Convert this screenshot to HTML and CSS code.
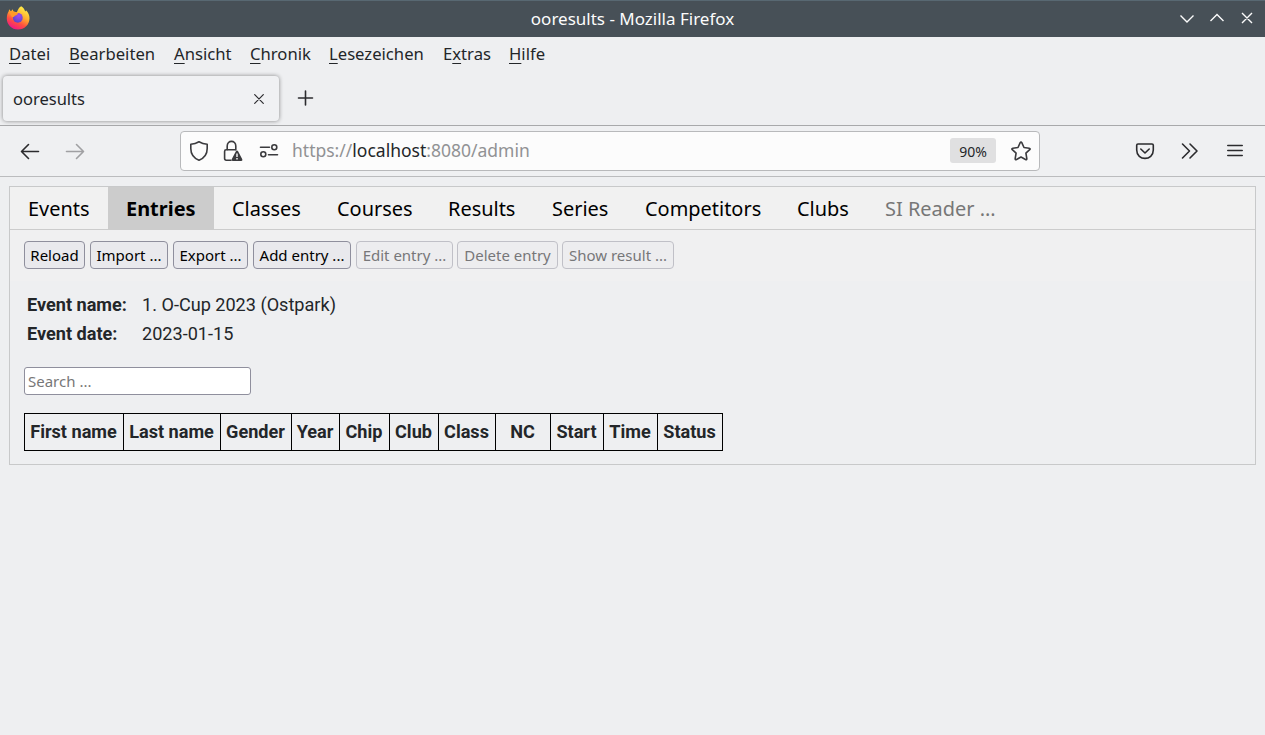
FILE: index.html
```html
<!DOCTYPE html>
<html lang="de">
<head>
<meta charset="utf-8">
<title>ooresults</title>
<link rel="stylesheet" href="styles.css">
</head>
<body>
<header class="titlebar">
  <svg class="logo" width="24" height="24" viewBox="0 0 24 24">
    <defs>
      <linearGradient id="flame" x1="0.8" y1="0.05" x2="0.3" y2="1">
        <stop offset="0" stop-color="#fff14a"/><stop offset="0.38" stop-color="#ffb02e"/>
        <stop offset="0.68" stop-color="#ff4f3f"/><stop offset="1" stop-color="#f0148c"/>
      </linearGradient>
      <radialGradient id="globe" cx="0.6" cy="0.3" r="0.7">
        <stop offset="0" stop-color="#a04bf0"/><stop offset="1" stop-color="#5b47c8"/>
      </radialGradient>
    </defs>
    <path fill="url(#flame)" d="M15.2.3C17.3 1.600 18.600 3.600 19.200 5.400C20 4.900 20 4.500 20 4.300C22.300 6.600 23.500 9.300 23.500 12.200C23.500 18.700 18.400 23.500 12 23.500C5.500 23.500.8 18.500.8 12.500C.8 9.500 1.500 7 2.700 5.200L3.200 3.300L5 5.600L6.500 3.200L7.500 5.500L10.800 6.200C12 4 12.800 1.500 15.200.3Z"/>
    <circle cx="11.800" cy="11.800" r="4.900" fill="url(#globe)"/>
    <path fill="#ff9a28" d="M3 5.300L7.500 5.500L12 7.200C11.800 9 9.800 9.200 8.800 9.800C8.300 11.200 6.500 11.500 5.500 10.500Z"/>
  </svg>
  <div class="caption">ooresults - Mozilla Firefox</div>
  <svg class="winctl" width="80" height="20" viewBox="0 0 80 20">
    <path d="M5.500 7.500L12 14L18.500 7.500M35.500 13L42 6.500L48.500 13M67 5L77 15M77 5L67 15"/>
  </svg>
</header>
<nav class="menubar">
  <span class="m1"><u>D</u>atei</span><span class="m2"><u>B</u>earbeiten</span><span class="m3"><u>A</u>nsicht</span><span class="m4"><u>C</u>hronik</span><span class="m5"><u>L</u>esezeichen</span><span class="m6">E<u>x</u>tras</span><span class="m7"><u>H</u>ilfe</span>
</nav>
<div class="tabstrip">
  <div class="browser-tab"><span>ooresults</span>
    <svg class="ico thin" width="10" height="10" viewBox="0 0 10 10"><path d="M.7.7L9.300 9.300M9.300.7L.7 9.300"/></svg>
  </div>
  <svg class="ico newtab" width="17" height="16" viewBox="0 0 17 16"><path d="M8.500 1V15M1.500 8H15.500"/></svg>
</div>
<div class="toolbar">
  <svg class="ico back" width="20" height="18" viewBox="0 0 20 18"><path d="M18.500 9.500H2M8.500 2.500L1.500 9.500L8.500 16.500"/></svg>
  <svg class="ico forward" width="20" height="18" viewBox="0 0 20 18"><path d="M1.500 9.500H18M11.500 2.500L18.500 9.500L11.500 16.500"/></svg>
  <div class="urlbar">
    <svg class="ico shield" width="20" height="22" viewBox="0 0 20 22"><path d="M10 1.700C12.500 3.200 15 4 18.200 4.300V8.500C18.200 14 15.500 18 10 20.300C4.500 18 1.800 14 1.800 8.500V4.300C5 4 7.500 3.200 10 1.700Z"/></svg>
    <svg class="ico lock" width="20" height="22" viewBox="0 0 20 22"><path d="M4.200 10V6C4.200 -.2 12.800 -.2 12.800 6V10M8 20.200H3.200Q1.600 20.200 1.600 18.600V11.400Q1.600 9.800 3.200 9.800H12.500"/><path class="solid" d="M14 10.500Q14.700 10.500 15.100 11.300L19.300 19.300Q19.800 21 18.300 21H9.700Q8.200 21 8.700 19.300L12.900 11.300Q13.300 10.500 14 10.500Z"/><path class="mark" d="M14 13.500V17M14 18V19.500"/></svg>
    <svg class="ico perms" width="20" height="14" viewBox="0 0 20 14"><path d="M1.500 3.300H10.500M9.500 10.700H18.500"/><circle cx="15.300" cy="3.300" r="2.500"/><circle cx="4.300" cy="10.300" r="2.500"/></svg>
    <span class="url">https://<b>localhost</b>:8080/admin</span>
    <span class="zoom">90%</span>
    <svg class="ico star" width="22" height="22" viewBox="0 0 22 22"><path d="M11 2Q11.500 2 11.800 2.700L14 7.500L19.200 8.200Q20.700 8.600 19.700 9.700L15.900 13.200L16.800 18.500Q16.900 20.200 15.500 19.500L11 17L6.500 19.500Q5.100 20.200 5.200 18.500L6.100 13.200L2.300 9.700Q1.300 8.600 2.800 8.200L8 7.500L10.200 2.700Q10.500 2 11 2Z"/></svg>
  </div>
  <svg class="ico pocket" width="20" height="18" viewBox="0 0 20 18"><path d="M3 2H17Q18.300 2 18.300 3.300V8C18.300 19.200 1.700 19.200 1.700 8V3.300Q1.700 2 3 2ZM5.800 7L10 11L14.200 7"/></svg>
  <svg class="ico more" width="18" height="18" viewBox="0 0 18 18"><path d="M1.500 2L8.500 9L1.500 16M9 2L16 9L9 16"/></svg>
  <svg class="ico burger" width="16" height="14" viewBox="0 0 16 14"><path d="M.8 1.500H15.200M.8 6.500H15.200M.8 11.500H15.200"/></svg>
</div>
<main class="panel">
  <nav class="tabs">
    <a class="t1">Events</a><a class="t2 active">Entries</a><a class="t3">Classes</a><a class="t4">Courses</a><a class="t5">Results</a><a class="t6">Series</a><a class="t7">Competitors</a><a class="t8">Clubs</a><a class="t9 off">SI Reader ...</a>
  </nav>
  <div class="actions">
    <button class="b1">Reload</button><button class="b2">Import ...</button><button class="b3">Export ...</button><button class="b4">Add entry ...</button><button class="b5" disabled>Edit entry ...</button><button class="b6" disabled>Delete entry</button><button class="b7" disabled>Show result ...</button>
  </div>
  <dl class="event">
    <dt>Event name:</dt><dd>1. O-Cup 2023 (Ostpark)</dd>
    <dt>Event date:</dt><dd>2023-01-15</dd>
  </dl>
  <input class="search" type="text" placeholder="Search ...">
  <table class="entries">
    <colgroup><col class="c1"><col class="c2"><col class="c3"><col class="c4"><col class="c5"><col class="c6"><col class="c7"><col class="c8"><col class="c9"><col class="c10"><col class="c11"></colgroup>
    <tr><th>First name</th><th>Last name</th><th>Gender</th><th>Year</th><th>Chip</th><th>Club</th><th>Class</th><th>NC</th><th>Start</th><th>Time</th><th>Status</th></tr>
  </table>
</main>
</body>
</html>
```
FILE: styles.css
```css
* { box-sizing: border-box; }
body {
  margin: 0;
  height: 735px;
  overflow: hidden;
  background: #eeeff1;
  color: #232629;
  font-family: "Noto Sans", sans-serif;
  font-size: 16.67px;
}
svg { display: block; flex: none; }
.ico { fill: none; stroke: #2b2b2e; stroke-width: 1.6; stroke-linecap: round; stroke-linejoin: round; }
.thin { stroke-width: 1.2; }

.titlebar {
  display: grid;
  grid-template-columns: 87px 1fr 87px;
  align-items: center;
  height: 37px;
  background: #475057;
  border-top: 1px solid #586872;
  color: #fcfcfc;
}
.logo { margin: -3px 0 0 6px; }
.caption { padding-bottom: 2px; font-size: 17px; text-align: center; }
.winctl { margin-left: -3px; margin-top: -3px; fill: none; stroke: #fcfcfc; stroke-width: 1.4; }

.menubar { display: flex; height: 39px; padding-left: 9px; line-height: 34px; white-space: nowrap; }
.menubar u { text-decoration-thickness: 1px; text-underline-offset: 3px; text-decoration-skip-ink: none; }
.m1 { width: 60px; }
.m2 { width: 105px; }
.m3 { width: 76px; }
.m4 { width: 79px; }
.m5 { width: 114px; }
.m6 { width: 66px; }

.tabstrip { display: flex; height: 50px; padding-left: 3px; border-bottom: 1px solid #a8a9ab; }
.browser-tab {
  display: flex;
  align-items: center;
  justify-content: space-between;
  width: 276px;
  height: 45px;
  padding: 0 15px 0 10px;
  border-radius: 4px;
  background: #f0f1f3;
  box-shadow: 0 0 4px rgba(0, 0, 0, 0.45);
  font-size: 16.5px;
}
.newtab { margin: 14px 0 0 18px; }

.toolbar { display: flex; align-items: center; height: 51px; padding-left: 20px; border-bottom: 1px solid #bbbcbe; background: #eff0f2; }
.forward { margin-left: 25px; opacity: 0.4; }
.urlbar {
  display: flex;
  align-items: center;
  width: 860px;
  height: 40px;
  margin-left: 95px;
  padding-left: 8px;
  border: 1px solid #b8b9bb;
  border-radius: 4px;
  background: #fcfcfc;
}
.urlbar .ico { stroke: #3b3b3e; }
.lock { margin-left: 14px; }
.lock .solid { fill: #3b3b3e; stroke: none; }
.lock .mark { stroke: #fcfcfc; stroke-width: 1.4; stroke-linecap: butt; }
.perms { margin-left: 16px; }
.url { width: 658px; margin-left: 13px; padding-bottom: 2px; color: #919294; font-size: 17.5px; }
.url b { color: #232629; font-weight: 400; }
.zoom { width: 46px; height: 25px; margin-bottom: 1px; border-radius: 3px; background: #e0e0e1; font-size: 14px; line-height: 27px; text-align: center; }
.star { margin-left: 14px; }
.pocket { margin-left: 95px; }
.more { margin-left: 26px; }
.burger { margin-left: 28px; }

.panel { width: 1247px; height: 279px; margin: 9px 0 0 9px; border: 1px solid #c8c9ca; }
.tabs { display: flex; height: 43px; border-bottom: 1px solid #ccc; background: #f1f1f1; color: #000; font-size: 19.95px; line-height: 43px; white-space: nowrap; }
.tabs a { padding-left: 18px; }
.tabs .active { height: 42px; background: #ccc; font-weight: 700; }
.tabs .off { color: #777; }
.t1 { width: 98px; }
.t2 { width: 106px; }
.t3 { width: 105px; }
.t4 { width: 111px; }
.t5 { width: 104px; }
.t6 { width: 93px; }
.t7 { width: 152px; }
.t8 { width: 88px; }

.actions { display: flex; height: 51px; padding: 11px 0 0 14px; background: #f0f0f1; }
.actions button {
  height: 28px;
  margin-right: 5px;
  padding: 0;
  border: 1px solid #8f8f9d;
  border-radius: 4px;
  background: #e9e9ed;
  color: #000;
  font: 15px/26px "Noto Sans", sans-serif;
  white-space: nowrap;
}
.actions button:disabled { border-color: #c0c0c7; background: #ededef; color: #777779; }
.b1 { width: 61px; }
.b2 { width: 78px; }
.b3 { width: 75px; }
.b4 { width: 98px; }
.actions .b5 { width: 97px; margin-right: 4px; }
.actions .b6 { width: 101px; margin-right: 4px; }
.b7 { width: 112px; }

.event {
  display: grid;
  grid-template-columns: 115px 1fr;
  grid-auto-rows: 29px;
  margin: 9px 0 0 17px;
  font-family: Roboto, sans-serif;
  font-size: 18.1px;
  line-height: 29px;
}
.event dt { font-weight: 700; }
.event dd { margin: 0; }

.search {
  display: block;
  width: 227px;
  height: 28px;
  margin: 19px 0 0 14px;
  padding: 0 3px;
  border: 1px solid #8f8f9d;
  border-radius: 3px;
  background: #fff;
  font: 15px "Noto Sans", sans-serif;
}
.search::placeholder { color: #777; }

.entries { table-layout: fixed; width: 699px; height: 38px; margin: 18px 0 0 14px; border-collapse: collapse; font-family: Roboto, sans-serif; font-size: 18.1px; }
.entries th { padding: 0 1px 2px 0; border: 1px solid #000; white-space: nowrap; }
.c1 { width: 99px; }
.c2 { width: 97px; }
.c3 { width: 71px; }
.c4 { width: 48px; }
.c5 { width: 50px; }
.c6 { width: 49px; }
.c7 { width: 57px; }
.c8 { width: 55px; }
.c9 { width: 53px; }
.c10 { width: 54px; }
.c11 { width: 65px; }
```
